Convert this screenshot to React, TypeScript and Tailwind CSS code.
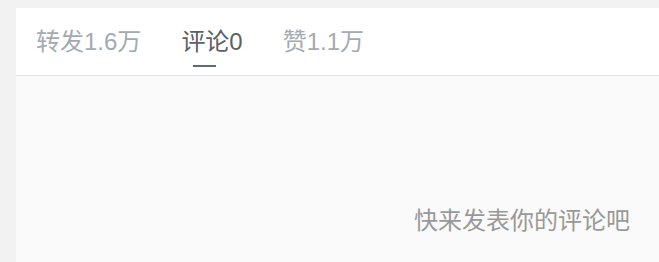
const TABS = [
  { label: "转发1.6万", active: false },
  { label: "评论0", active: true },
  { label: "赞1.1万", active: false },
];

export default function App() {
  return (
    <div
      className="min-h-[262px] bg-[#f2f2f2] pt-2 pl-4"
      style={{ fontFamily: '"Liberation Sans", "Noto Sans CJK SC", sans-serif' }}
    >
      <div className="bg-[#fafafa] min-h-[254px]">
        <nav className="flex h-[68px] border-b border-[#e6e6e6] bg-white">
          {TABS.map((t) => (
            <div
              key={t.label}
              className={`relative px-5 pt-[17px] text-[24px] leading-[34px] ${
                t.active ? "text-[#5a6168]" : "text-[#a4aab1]"
              }`}
            >
              {t.label}
              {t.active && (
                <span className="absolute left-8 top-[57px] h-[2px] w-[23px] bg-[#636b72]" />
              )}
            </div>
          ))}
        </nav>
        <p className="pt-[128px] pr-[29px] text-right text-[24px] leading-[34px] text-[#999999]">
          快来发表你的评论吧
        </p>
      </div>
    </div>
  );
}
